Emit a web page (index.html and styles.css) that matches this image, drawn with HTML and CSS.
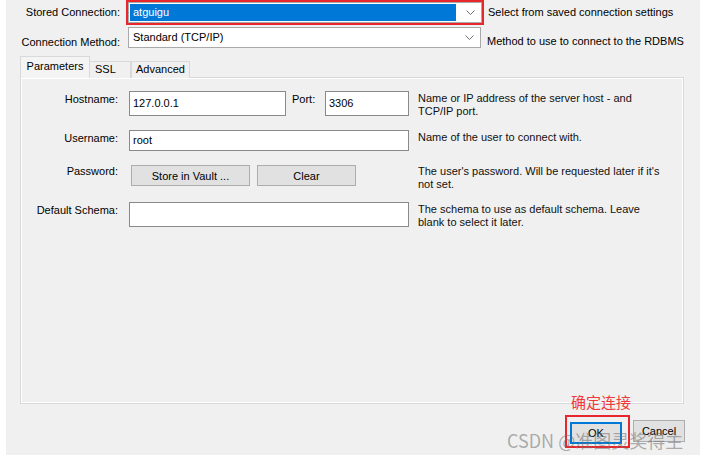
FILE: index.html
```html
<!DOCTYPE html>
<html lang="en">
<head>
    <meta charset="UTF-8">
    <title>Setup New Connection</title>
    <link rel="stylesheet" href="styles.css">
</head>
<body>

    <div class="dialog">
        <!-- Linha: conexão salva -->
        <div class="conn-row stored">
            <span class="conn-label">Stored Connection:</span>
            <div class="mark-box">
                <div class="combo">
                    <span class="combo-value selected">atguigu</span>
                    <svg class="chevron" width="9" height="5" viewBox="0 0 9 5"><polyline points="0.5,0.5 4.5,4.5 8.5,0.5" fill="none" stroke="#707070" stroke-width="1"/></svg>
                </div>
            </div>
            <span class="conn-hint">Select from saved connection settings</span>
        </div>

        <!-- Linha: método de conexão -->
        <div class="conn-row method">
            <span class="conn-label">Connection Method:</span>
            <div class="combo wide">
                <span class="combo-value">Standard (TCP/IP)</span>
                <svg class="chevron" width="9" height="5" viewBox="0 0 9 5"><polyline points="0.5,0.5 4.5,4.5 8.5,0.5" fill="none" stroke="#707070" stroke-width="1"/></svg>
            </div>
            <span class="conn-hint">Method to use to connect to the RDBMS</span>
        </div>

        <!-- Abas -->
        <div class="tabs">
            <div class="tab active">Parameters</div>
            <div class="tab ssl">SSL</div>
            <div class="tab adv">Advanced</div>
        </div>

        <div class="tab-panel">
            <div class="form-row host">
                <span class="field-label">Hostname:</span>
                <div class="field-controls">
                    <div class="text-box hostname">127.0.0.1</div>
                    <span class="port-label">Port:</span>
                    <div class="text-box port">3306</div>
                </div>
                <span class="field-hint">Name or IP address of the server host - and<br>TCP/IP port.</span>
            </div>

            <div class="form-row user">
                <span class="field-label">Username:</span>
                <div class="field-controls">
                    <div class="text-box full">root</div>
                </div>
                <span class="field-hint">Name of the user to connect with.</span>
            </div>

            <div class="form-row password">
                <span class="field-label">Password:</span>
                <div class="field-controls">
                    <button class="btn vault">Store in Vault ...</button>
                    <button class="btn clear">Clear</button>
                </div>
                <span class="field-hint">The user's password. Will be requested later if it's<br>not set.</span>
            </div>

            <div class="form-row schema">
                <span class="field-label">Default Schema:</span>
                <div class="field-controls">
                    <div class="text-box full"></div>
                </div>
                <span class="field-hint">The schema to use as default schema. Leave<br>blank to select it later.</span>
            </div>
        </div>

        <!-- Botões do diálogo -->
        <div class="dialog-buttons">
            <div class="ok-mark">
                <button class="btn btn-ok">OK</button>
            </div>
            <button class="btn btn-cancel">Cancel</button>
        </div>

        <!-- Anotações -->
        <div class="note">确定连接</div>
        <div class="watermark">CSDN @准图灵奖得主</div>
    </div>

</body>
</html>
```

FILE: styles.css
```css
/* Estilos gerais */
body {
    margin: 0;
    padding: 0;
    background-color: #fff;
    font-family: "Liberation Sans", Arial, sans-serif;
    font-size: 11px;
    color: #000;
}

.dialog {
    position: relative;
    margin-left: 6px;
    width: 694px;
    height: 455px;
    background-color: #f0f0f0;
}

/* Linhas superiores */
.conn-row {
    display: flex;
    align-items: flex-start;
    line-height: 13px;
}

.conn-row.stored {
    height: 25px;
}

.conn-row.method {
    margin-top: 2px;
    height: 21px;
}

.conn-label {
    width: 114px;
    text-align: right;
    margin-right: 6px;
    padding-top: 6px;
}

.conn-row.method .conn-label {
    padding-top: 9px;
    margin-right: 8px;
}

.conn-hint {
    padding-top: 6px;
    margin-left: 4px;
}

.conn-row.method .conn-hint {
    padding-top: 8px;
    margin-left: 6px;
}

.mark-box {
    border: 2px solid #e8272c;
    width: 354px;
    height: 21px;
}

.combo {
    box-sizing: border-box;
    display: flex;
    align-items: center;
    width: 354px;
    height: 21px;
    background-color: #fff;
    border: 1px solid #a9a9a9;
    padding: 1px;
}

.combo.wide {
    width: 353px;
}

.combo-value {
    flex: 1;
    height: 17px;
    line-height: 17px;
    padding-left: 3px;
}

.combo-value.selected {
    background-color: #0078d7;
    color: #fff;
    margin-right: 10px;
}

.chevron {
    margin: 0 5px 0 0;
}

/* Abas */
.tabs {
    display: flex;
    align-items: flex-end;
    margin: 9px 0 -1px 14px;
    height: 21px;
    position: relative;
}

.tab {
    box-sizing: border-box;
    height: 17px;
    line-height: 15px;
    border: 1px solid #d9d9d9;
    border-bottom: none;
    text-align: center;
    background-color: #f0f0f0;
}

.tab.active {
    width: 70px;
    height: 22px;
    line-height: 18px;
    background-color: #f4f4f4;
    z-index: 1;
}

.tab.ssl {
    width: 41px;
    border-left: none;
    text-align: left;
    padding-left: 5px;
}

.tab.adv {
    width: 59px;
}

.tab-panel {
    box-sizing: border-box;
    margin-left: 14px;
    width: 664px;
    height: 327px;
    border: 1px solid #d9d9d9;
    box-shadow: inset 1px 1px 0 #fff, inset -1px -1px 0 #fff;
    background-color: #f0f0f0;
    padding-top: 13px;
}

/* Linhas do formulário */
.form-row {
    display: flex;
    align-items: flex-start;
    line-height: 13px;
}

.form-row.host {
    height: 25px;
}

.form-row.user {
    margin-top: 14px;
    height: 21px;
}

.form-row.password {
    margin-top: 14px;
    height: 21px;
}

.form-row.schema {
    margin-top: 16px;
    height: 25px;
}

.field-label {
    width: 97px;
    text-align: right;
    margin-right: 11px;
    padding-top: 2px;
}

.form-row.password .field-label,
.form-row.password .field-hint {
    padding-top: 0;
}

.field-controls {
    display: flex;
    align-items: flex-start;
    width: 280px;
    height: 100%;
    margin-right: 9px;
}

.field-hint {
    padding-top: 1px;
    color: #111;
}

.text-box {
    box-sizing: border-box;
    height: 100%;
    background-color: #fff;
    border: 1px solid #8a8a8a;
    padding: 0 3px;
    display: flex;
    align-items: center;
}

.text-box.hostname {
    width: 157px;
}

.text-box.port {
    width: 84px;
}

.text-box.full {
    width: 280px;
}

.port-label {
    margin: 0 7px 0 6px;
    padding-top: 2px;
    width: 26px;
}

/* Botões */
.btn {
    box-sizing: border-box;
    height: 21px;
    background-color: #e1e1e1;
    border: 1px solid #adadad;
    font-family: inherit;
    font-size: 11px;
    color: #000;
    padding: 0;
}

.btn.vault {
    width: 119px;
    margin-left: 2px;
}

.btn.clear {
    width: 99px;
    margin-left: 7px;
}

.dialog-buttons {
    display: flex;
    justify-content: flex-end;
    align-items: flex-start;
    margin-top: 11px;
    padding-right: 15px;
}

.ok-mark {
    border: 2px solid #e8272c;
    padding: 5px 6px 2px 3px;
}

.btn-ok {
    width: 52px;
    height: 22px;
    border: 2px solid #0078d7;
}

.btn-cancel {
    width: 52px;
    height: 22px;
    margin: 5px 0 0 3px;
}

/* Anotações sobre a imagem */
.note {
    position: absolute;
    left: 565px;
    top: 393px;
    font-family: "Noto Sans CJK SC", sans-serif;
    font-size: 15px;
    color: #f0383a;
    line-height: 18px;
}

.watermark {
    position: absolute;
    left: 501px;
    top: 429px;
    font-family: "Noto Sans CJK SC", sans-serif;
    font-size: 18px;
    line-height: 22px;
    color: rgba(110, 110, 110, 0.55);
    white-space: nowrap;
}
```
